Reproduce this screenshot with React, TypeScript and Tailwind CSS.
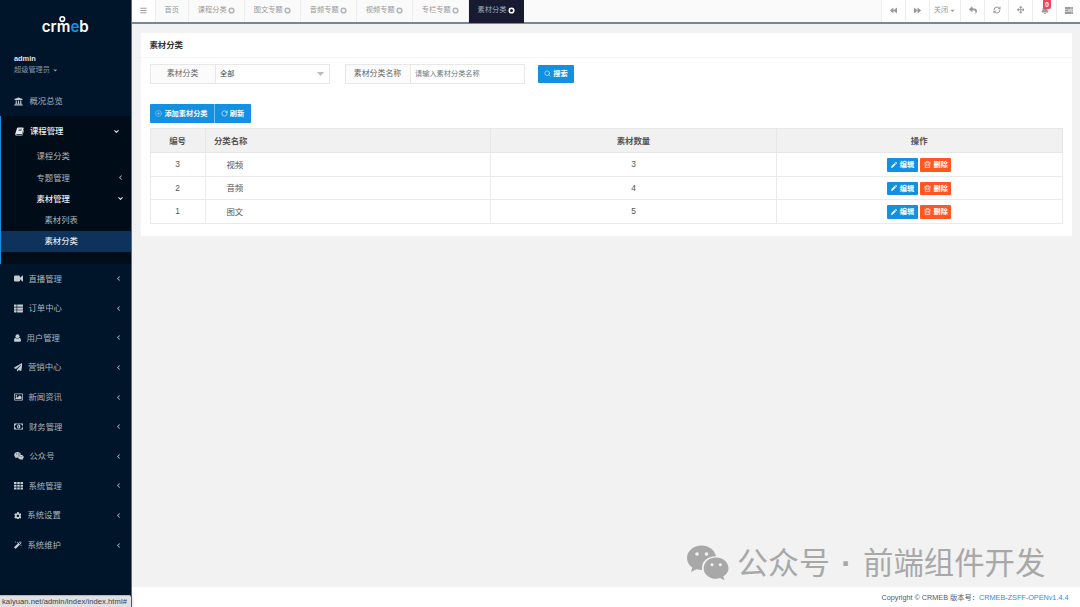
import type { ReactNode } from 'react'
import {
  FaArrowsAlt,
  FaBackward,
  FaBars,
  FaBell,
  FaCaretDown,
  FaCog,
  FaForward,
  FaPaperPlane,
  FaReply,
  FaThList,
  FaUniversity,
  FaWeixin,
} from 'react-icons/fa'
import { ChevronDown, ChevronLeft, CirclePlus, RefreshCw, RotateCw, Search } from 'lucide-react'

interface MenuItem {
  label: string
  icon: ReactNode
}

const menus: MenuItem[] = [
  { label: '直播管理', icon: <VideoIcon /> },
  { label: '订单中心', icon: <FaThList size={9} /> },
  { label: '用户管理', icon: <UserIcon /> },
  { label: '营销中心', icon: <FaPaperPlane size={8.5} /> },
  { label: '新闻资讯', icon: <ImageIcon /> },
  { label: '财务管理', icon: <MoneyIcon /> },
  { label: '公众号', icon: <FaWeixin size={10} /> },
  { label: '系统管理', icon: <GridIcon /> },
  { label: '系统设置', icon: <FaCog size={7.8} /> },
  { label: '系统维护', icon: <MagicIcon /> },
]

const tabs = ['课程分类', '图文专题', '音频专题', '视频专题', '专栏专题']

const rows = [
  { id: 3, name: '视频', count: 3 },
  { id: 2, name: '音频', count: 4 },
  { id: 1, name: '图文', count: 5 },
]

export default function App() {
  return (
    <div className="relative flex h-[607px] w-[1080px] overflow-hidden bg-[#f2f2f2] font-['Liberation_Sans','Noto_Sans_CJK_SC',sans-serif] text-[8.4px] leading-none text-[#555]">
      <Sidebar />
      <div className="flex min-w-0 flex-1 flex-col">
        <TopBar />
        <main className="flex-1 pt-[9px] pr-[8.5px] pl-[8.5px]">
          <MaterialCategory />
        </main>
        <footer className="flex h-5 items-center justify-end bg-white pt-[2px] pr-[11.5px] text-[7.25px] text-[#515a6e]">
          <span className="whitespace-pre">Copyright © CRMEB 版本号：</span>
          <a className="text-[#2d8cf0]">CRMEB-ZSFF-OPENv1.4.4</a>
        </footer>
      </div>
      <Watermark />
      {/* Browser link status */}
      <div className="absolute bottom-0 left-0 flex h-[12px] w-[131px] items-center rounded-tr-[2px] border-t border-[#b5b8bd] bg-[#dee0e4] pl-[2px] text-[7.6px] tracking-[0.06px] whitespace-nowrap text-[#3b3e42] shadow-[0_0_4px_rgba(0,0,0,0.35)]">
        kaiyuan.net/admin/index/index.html#
      </div>
    </div>
  )
}

function Logo() {
  return (
    <svg className="ml-[41px] mt-[15px] h-5 w-[50px]" viewBox="0 0 50 20">
      <text
        x="0.8"
        y="17.3"
        fontFamily="Inter, sans-serif"
        fontWeight="600"
        fontSize="15.5"
        fill="#fff"
        textLength="47"
        lengthAdjust="spacingAndGlyphs"
      >
        crm<tspan fill="#1890e0">e</tspan>b
      </text>
      <circle cx="21.3" cy="4.1" r="2.3" fill="none" stroke="#fff" strokeWidth="1.6" />
    </svg>
  )
}

function BookIcon() {
  return (
    <svg className="h-[9px] w-[9px]" viewBox="0 0 18 18" fill="currentColor">
      <path d="M6.2 1h9.6c1.2 0 1.7.9 1.4 2l-3 9.8c-.3.9-1 1.400-1.900 1.400H3.200c-.8 0-.9.4-.7.8.2.5.7.7 1.500.7h9.200c.6 0 1-.3 1.200-.8L17.300 5.500c.7.5.8 1 .5 1.900l-2.700 8.400c-.3.8-1.100 1.400-2 1.400H3.500C1.300 17.200-.1 15.300.6 13.400L4 2.700C4.300 1.700 5.100 1 6.200 1z" />
      <path d="M7.500 4.500h6.500M6.700 7.200h6.500" stroke="#000c17" strokeWidth="1.100" />
    </svg>
  )
}

function VideoIcon() {
  return (
    <svg className="h-[7px] w-[9px]" viewBox="0 0 18 14" fill="currentColor">
      <rect x="0" y="1" width="12" height="12" rx="2.500" />
      <path d="M11.500 6 17 1.200c.4-.3 1-.1 1 .5v10.600c0 .6-.6.8-1 .5L11.500 8z" />
    </svg>
  )
}

function UserIcon() {
  return (
    <svg className="h-[8px] w-[7px]" viewBox="0 0 14 16" fill="currentColor">
      <circle cx="7" cy="4.500" r="4" />
      <path d="M3.300 7.300C1 7.700 0 10.500 0 13c0 1.600 1 2.600 2.600 2.600h8.800c1.600 0 2.600-1 2.600-2.600 0-2.500-1-5.300-3.300-5.700C9.700 8.400 8.400 9 7 9s-2.700-.6-3.700-1.700z" />
    </svg>
  )
}

function ImageIcon() {
  return (
    <svg className="h-[8px] w-[9px]" viewBox="0 0 18 16" fill="currentColor">
      <path fillRule="evenodd" d="M1.500 1h15c.8 0 1.500.7 1.500 1.500v11c0 .8-.7 1.500-1.500 1.500h-15C.7 15 0 14.300 0 13.500v-11C0 1.700.7 1 1.500 1zm0 1.500v11h15v-11z" />
      <circle cx="4.800" cy="5.800" r="1.600" />
      <path d="M3 12v-2l2.500-2.500L7 9l4.500-4.500L15 8v4z" />
    </svg>
  )
}

function MoneyIcon() {
  return (
    <svg className="h-[7px] w-[9.500px]" viewBox="0 0 19 14" fill="currentColor">
      <path fillRule="evenodd" d="M0 1h19v12H0zm4 1.500A2.600 2.600 0 0 1 1.500 5v4A2.600 2.600 0 0 1 4 11.500h11A2.600 2.600 0 0 1 17.500 9V5A2.600 2.600 0 0 1 15 2.500z" />
      <path fillRule="evenodd" d="M9.500 3c2 0 3.300 1.800 3.300 4s-1.300 4-3.300 4-3.300-1.800-3.300-4S7.500 3 9.500 3zM8.800 4.800v4.400h1.500V4.800z" />
    </svg>
  )
}

function GridIcon() {
  return (
    <svg className="h-[7.500px] w-[9px]" viewBox="0 0 18 15" fill="currentColor">
      <path d="M0 0h5v4H0zM6.500 0h5v4h-5zM13 0h5v4h-5zM0 5.500h5v4H0zM6.500 5.500h5v4h-5zM13 5.500h5v4h-5zM0 11h5v4H0zM6.500 11h5v4h-5zM13 11h5v4h-5z" />
    </svg>
  )
}

function MagicIcon() {
  return (
    <svg className="h-[8px] w-[8px]" viewBox="0 0 16 16" fill="currentColor">
      <path fillRule="evenodd" d="M12.700.8l2.300 2.300c.3.3.3.6 0 .9L3.600 15.400c-.3.3-.6.3-.9 0L.4 13.100c-.3-.3-.3-.6 0-.9L11.800.8c.3-.3.6-.3.9 0zM12.200 2.200 9.600 4.800l1.200 1.200 2.600-2.600z" />
      <path d="M3 .5l.4 1.200 1.200.4-1.200.4L3 3.700l-.4-1.200-1.200-.4 1.200-.4zM7 1.500l.5 1.300 1.300.5-1.300.5L7 5.100l-.5-1.300-1.300-.5 1.300-.5zM14 7l.4 1.200 1.200.4-1.200.4-.4 1.200-.4-1.200-1.200-.4 1.200-.4z" />
    </svg>
  )
}

function Sidebar() {
  return (
    <aside className="flex h-full w-[132px] shrink-0 flex-col border-r border-[#5d6b7a] bg-[#001529] text-[#a9b3bd]">
      <Logo />
      <div className="mt-[20px] ml-[14px] h-[31.800px]">
        <p className="text-[7.400px] leading-[8px] font-bold text-[#dfe4ed]">admin</p>
        <p className="mt-[3px] flex items-center gap-[2px] text-[7.200px] leading-[8px] text-[#8095a8]">
          超级管理员
          <FaCaretDown size={6.5} />
        </p>
      </div>
      <div className="flex h-[29.600px] shrink-0 items-center gap-[7px] pl-[13.500px]">
        <FaUniversity size={9} className="text-[#c3cad1]" />
        概况总览
      </div>

      {/* Opened group */}
      <div className="h-[147.600px] shrink-0 border-l border-[#1390e0] bg-[#000c17]">
        <div className="flex h-[29.600px] items-center gap-[6px] pr-[11px] pl-[14px] font-medium text-[#e8ebee]">
          <BookIcon />
          课程管理
          <ChevronDown size={7} strokeWidth={3.5} className="ml-auto" />
        </div>
        <SubItem>课程分类</SubItem>
        <SubItem arrow={<ChevronLeft size={7} strokeWidth={3.5} />}>专题管理</SubItem>
        <div className="font-medium text-[#e8ebee]">
          <SubItem arrow={<ChevronDown size={7} strokeWidth={3.5} />}>素材管理</SubItem>
        </div>
        <div className="flex h-[21.200px] items-center pl-[43.500px]">素材列表</div>
        <div className="flex h-[21.200px] items-center bg-[#0d325c] pl-[43.500px] font-medium text-[#dfe5ec]">
          素材分类
        </div>
      </div>

      {menus.map(({ label, icon }) => (
        <div key={label} className="flex h-[29.600px] shrink-0 items-center gap-[6px] pr-[9.500px] pl-[13.500px]">
          <span className="text-[#c3cad1]">{icon}</span>
          {label}
          <ChevronLeft size={7} strokeWidth={3.5} className="ml-auto" />
        </div>
      ))}
    </aside>
  )
}

function SubItem({ children, arrow }: { children: ReactNode; arrow?: ReactNode }) {
  return (
    <div className="flex h-[21.200px] items-center justify-between pr-[7px] pl-[35.500px]">
      {children}
      {arrow}
    </div>
  )
}

function TopBar() {
  return (
    <header className="flex h-6 border-b-2 border-[#788796] bg-[#fafafa] text-[7.200px] text-[#999]">
      <div className="flex w-[24px] items-center justify-center border-r border-[#eee] bg-white pb-[2px]">
        <FaBars size={7} />
      </div>
      <div className="flex w-[32.500px] items-center justify-center border-r border-[#eee] pb-[2px]">首页</div>
      {tabs.map((tab) => (
        <div key={tab} className="flex w-[56px] items-center justify-center gap-[1.500px] border-r border-[#eee] pb-[2px] pl-[1px]">
          {tab}
          <span className="text-[#b5b5b5]">
            <CloseIcon />
          </span>
        </div>
      ))}
      <div className="-mb-[1px] flex w-[55.500px] items-center justify-center gap-[1.500px] bg-[#171a30] pb-[3px] text-[#aaacb8]">
        素材分类
        <span className="text-white">
          <CloseIcon />
        </span>
      </div>
      <div className="ml-auto flex bg-white">
        <Tool><FaBackward size={7} /></Tool>
        <Tool><FaForward size={7} /></Tool>
        <div className="flex w-[31px] items-center justify-center gap-[1px] border-l border-[#eee] pb-[2px]">
          关闭
          <FaCaretDown size={7} />
        </div>
        <Tool><FaReply size={8} /></Tool>
        <Tool><RefreshCw size={8} strokeWidth={3} /></Tool>
        <Tool><FaArrowsAlt size={7.500} /></Tool>
        <Tool>
          <FaBell size={8} />
          <span className="absolute -top-[1px] left-[10px] flex h-[10px] w-[8px] items-center justify-center rounded-[2px] bg-[#ed4561] text-[7px] font-bold text-white">
            0
          </span>
        </Tool>
        <Tool>
          <svg className="h-[7px] w-[8px]" viewBox="0 0 16 14" fill="currentColor">
            <path fillRule="evenodd" d="M0 0h16v4H0zM10 1.300v1.400h4.700V1.300zM0 5h16v4H0zM6 6.300v1.400h8.700V6.300zM0 10h16v4H0zM11.500 11.300v1.400h3.200v-1.400z" />
          </svg>
        </Tool>
      </div>
    </header>
  )
}

function Tool({ children }: { children: ReactNode }) {
  return (
    <div className="relative flex w-[24px] items-center justify-center border-l border-[#eee] pb-[2px]">
      {children}
    </div>
  )
}

function CloseIcon() {
  return (
    <svg className="h-[7px] w-[7px]" viewBox="0 0 14 14" fill="none" stroke="currentColor">
      <circle cx="7" cy="7" r="4.600" strokeWidth="3.200" />
    </svg>
  )
}

function MaterialCategory() {
  return (
    <section className="h-[202.500px] bg-white">
      <h1 className="flex h-[25px] items-center border-b border-[#f6f6f6] pl-[9px] font-bold text-[#333]">
        素材分类
      </h1>

      <div className="px-[9px] pt-[6px]">
        <div className="flex h-[19.500px] items-center text-[7.900px]">
          <Field label="素材分类">
            <span className="text-[#444]">全部</span>
            <svg className="h-[4px] w-[7px]" viewBox="0 0 7 4" fill="#bbb">
              <path d="M0 0h7L3.500 4z" />
            </svg>
          </Field>
          <div className="ml-[14.500px]">
            <Field label="素材分类名称">
              <span className="text-[#757575]">请输入素材分类名称</span>
            </Field>
          </div>
          <button className="ml-[13px] flex h-[18px] w-[36px] items-center justify-center gap-[2px] rounded-[1px] bg-[#1390e0] text-[7.200px] font-bold text-white">
            <Search size={7} strokeWidth={2} className="opacity-90" />
            搜索
          </button>
        </div>

        <div className="mt-[20.500px] flex text-[7.200px] font-bold text-white">
          <button className="flex h-[18.500px] w-[65px] items-center justify-center gap-[2px] rounded-l-[1px] border-r border-[#7cc0ec] bg-[#1390e0]">
            <CirclePlus size={7} strokeWidth={1.6} className="opacity-70" />
            添加素材分类
          </button>
          <button className="flex h-[18.500px] w-[36px] items-center justify-center gap-[2px] rounded-r-[1px] bg-[#1390e0]">
            <RotateCw size={7} strokeWidth={2} />
            刷新
          </button>
        </div>

        <table className="mt-[5.500px] w-[913px] table-fixed border-collapse text-center text-[#555]">
          <thead>
            <tr className="h-[24px] bg-[#f1f1f1] text-[#555]">
              <th className="w-[55px] border border-[#e7e7e7] p-0 pt-px">编号</th>
              <th className="border border-[#e7e7e7] p-0 pt-px pl-[8.500px] text-left">分类名称</th>
              <th className="border border-[#e7e7e7] p-0 pt-px">素材数量</th>
              <th className="border border-[#e7e7e7] p-0 pt-px">操作</th>
            </tr>
          </thead>
          <tbody>
            {rows.map((row) => (
              <tr key={row.id} className="h-[23.600px]">
                <td className="border border-[#eaeaea] p-0">{row.id}</td>
                <td className="border border-[#eaeaea] p-0 pt-px pl-[21px] text-left">{row.name}</td>
                <td className="border border-[#eaeaea] p-0">{row.count}</td>
                <td className="border border-[#eaeaea] p-0">
                  <div className="flex justify-center gap-[2.500px] pt-px text-[7.200px] font-bold text-white">
                    <button className="flex h-[13.500px] w-[31px] items-center justify-center gap-[3px] rounded-[1px] bg-[#1390e0]">
                      <PencilIcon />
                      编辑
                    </button>
                    <button className="flex h-[13.500px] w-[31px] items-center justify-center gap-[2.500px] rounded-[1px] bg-[#ff5722]">
                      <TrashIcon />
                      删除
                    </button>
                  </div>
                </td>
              </tr>
            ))}
          </tbody>
        </table>
      </div>
    </section>
  )
}

function PencilIcon() {
  return (
    <svg className="h-[6px] w-[6px]" viewBox="0 0 12 12" fill="currentColor">
      <path d="M0 12l.8-3.300L7.300 2.200l2.500 2.500-6.500 6.500zM8.200 1.300l.9-.9c.4-.4.9-.4 1.300 0l1.200 1.200c.4.4.4.9 0 1.300l-.9.9z" />
    </svg>
  )
}

function TrashIcon() {
  return (
    <svg className="h-[7px] w-[7px]" viewBox="0 0 14 14" fill="none" stroke="currentColor" strokeWidth="1.300">
      <path d="M.5 3.500h13M4.500 3V1h5v2M2.500 3.500V13h9V3.500M5.500 6v4.500M8.500 6v4.500" />
    </svg>
  )
}

function Field({ label, children }: { label: string; children: ReactNode }) {
  return (
    <div className="flex h-[19.500px] w-[180.500px] border border-[#e8e8e8]">
      <label className="flex w-[65px] items-center justify-center border-r border-[#e8e8e8] bg-[#fbfbfb] text-[#666]">
        {label}
      </label>
      <div className="flex flex-1 items-center justify-between pr-[5px] pl-[4.500px] text-[7.200px]">{children}</div>
    </div>
  )
}

function Watermark() {
  return (
    <div className="absolute top-[540px] left-[686px] flex h-[46px] items-center text-[31px] whitespace-pre text-[#a8a8a8]">
      <svg className="-mt-[2px] h-[37px] w-[43px]" viewBox="0 0 43 37" fill="#a8a8a8">
        <path d="M15.500 1.500C7.500 1.500 1 7 1 14c0 4 2 7.300 5.300 9.600L5 28l5.300-2.700c1.700.5 3.500.8 5.700.8C15 17.500 21 12.200 30 12.200 28.700 6 22.700 1.500 15.500 1.500z" />
        <path d="M42.500 24.200c0-5.900-5.700-10.600-12.500-10.600s-12.300 4.700-12.300 10.600S23.200 34.800 30 34.800c1.500 0 3-.3 4.300-.7l4.200 2.300-1.200-3.900c3.200-2 5.200-5 5.200-8.300z" />
        <g fill="#f2f2f2">
          <circle cx="11" cy="10" r="1.800" />
          <circle cx="20.500" cy="10" r="1.800" />
          <circle cx="26" cy="20.700" r="1.500" />
          <circle cx="34.300" cy="20.700" r="1.500" />
        </g>
      </svg>
      <span className="ml-[8px] font-normal">公众号</span>
      <span className="w-[33px] text-center font-bold">·</span>
      <span className="text-[30.400px] font-normal">前端组件开发</span>
    </div>
  )
}
